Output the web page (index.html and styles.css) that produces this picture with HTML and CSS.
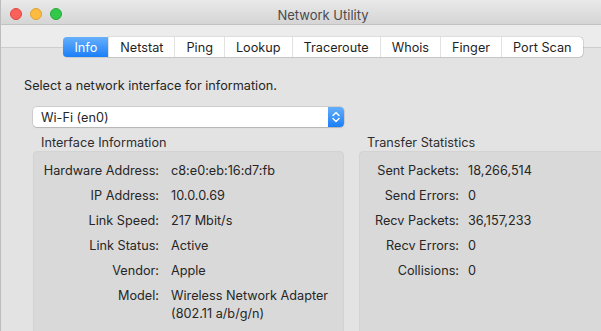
FILE: index.html
```html
<!DOCTYPE html>
<html>
<head>
<meta charset="utf-8">
<title>Network Utility</title>
<link rel="stylesheet" href="styles.css">
</head>
<body>
<div class="window">
  <header class="titlebar">
    <div class="lights">
      <span class="light close"></span>
      <span class="light min"></span>
      <span class="light max"></span>
    </div>
    <div class="title">Network Utility</div>
    <div></div>
  </header>
  <main class="main">
    <nav class="tabs">
      <span class="tab active">Info</span>
      <span class="tab">Netstat</span>
      <span class="tab">Ping</span>
      <span class="tab">Lookup</span>
      <span class="tab">Traceroute</span>
      <span class="tab">Whois</span>
      <span class="tab">Finger</span>
      <span class="tab">Port Scan</span>
    </nav>
    <section class="pane">
      <p class="prompt">Select a network interface for information.</p>
      <div class="popup">
        <span class="popup-label">Wi-Fi (en0)</span>
        <span class="stepper">
          <svg width="16" height="20" viewBox="0 0 16 20"><polyline points="5,8.5 8,5.5 11,8.5" fill="none" stroke="#fff" stroke-width="1.4" stroke-linecap="round" stroke-linejoin="round"/><polyline points="5,11.5 8,14.5 11,11.5" fill="none" stroke="#fff" stroke-width="1.4" stroke-linecap="round" stroke-linejoin="round"/></svg>
        </span>
      </div>
      <div class="groups">
        <div class="group">
          <div class="group-title">Interface Information</div>
          <dl class="box box-left">
            <dt>Hardware Address:</dt><dd>c8:e0:eb:16:d7:fb</dd>
            <dt>IP Address:</dt><dd>10.0.0.69</dd>
            <dt>Link Speed:</dt><dd>217 Mbit/s</dd>
            <dt>Link Status:</dt><dd>Active</dd>
            <dt>Vendor:</dt><dd>Apple</dd>
            <dt>Model:</dt><dd>Wireless Network Adapter<br>(802.11 a/b/g/n)</dd>
          </dl>
        </div>
        <div class="group">
          <div class="group-title">Transfer Statistics</div>
          <dl class="box box-right">
            <dt>Sent Packets:</dt><dd>18,266,514</dd>
            <dt>Send Errors:</dt><dd>0</dd>
            <dt>Recv Packets:</dt><dd>36,157,233</dd>
            <dt>Recv Errors:</dt><dd>0</dd>
            <dt>Collisions:</dt><dd>0</dd>
          </dl>
        </div>
      </div>
    </section>
  </main>
</div>
</body>
</html>
```

FILE: styles.css
```css
html, body {
  margin: 0;
  padding: 0;
  overflow: hidden;
  background: #e3e3e3;
}

body {
  font-family: Inter, "Liberation Sans", sans-serif;
  font-size: 12.7px;
  color: #262626;
}

.window {
  width: 645px;
  height: 331px;
  border-left: 1px solid #bdbdbd;
  display: flex;
  flex-direction: column;
  overflow: hidden;
  box-sizing: border-box;
}

.titlebar {
  height: 24px;
  flex: none;
  display: grid;
  grid-template-columns: 1fr auto 1fr;
  align-items: center;
  background: linear-gradient(#e9e9e9, #d5d5d5);
  border-bottom: 1px solid #c2c2c2;
}

.lights {
  display: flex;
  gap: 8px;
  padding-left: 9px;
  padding-top: 4px;
}

.light {
  width: 12px;
  height: 12px;
  border-radius: 50%;
  box-sizing: border-box;
}

.close { background: #fc605b; border: 0.5px solid #de4842; }
.min { background: #fdbc40; border: 0.5px solid #dea235; }
.max { background: #34c84a; border: 0.5px solid #27a93a; }

.title {
  color: #4a4a4a;
  padding-top: 5px;
  font-size: 13px;
}

.main {
  flex: 1;
  background: linear-gradient(#ececec 0, #ececec 22px, #cdcdcd 22px, #cdcdcd 23px, #e3e3e3 23px);
}

.tabs {
  display: flex;
  justify-content: center;
  margin-top: 12px;
  height: 20px;
}

.tab {
  display: flex;
  align-items: center;
  padding: 0 11px;
  background: #fff;
  border-left: 1px solid #e2e2e2;
  box-shadow: 0 0.5px 0 rgba(0,0,0,0.25), 0 -0.5px 0 rgba(0,0,0,0.12);
  color: #1f1f1f;
}

.tab:first-child {
  border-left: none;
  border-radius: 4px 0 0 4px;
}

.tab:last-child {
  border-radius: 0 4px 4px 0;
  box-shadow: 0 0.5px 0 rgba(0,0,0,0.25), 0 -0.5px 0 rgba(0,0,0,0.12), 0.5px 0 0 rgba(0,0,0,0.2);
}

.tab.active {
  background: linear-gradient(#67b0fb, #1b7ff8);
  color: #fff;
  box-shadow: 0 0.5px 0 rgba(0,0,0,0.2);
}

.pane {
  padding-left: 23px;
}

.prompt {
  margin: 21px 0 0 0;
  line-height: 16px;
}

.popup {
  margin: 13px 0 0 9px;
  width: 311px;
  height: 20px;
  display: flex;
  align-items: center;
  justify-content: space-between;
  background: #fff;
  border-radius: 4px;
  box-shadow: 0 0 0 0.5px rgba(0,0,0,0.18), 0 1px 1px rgba(0,0,0,0.12);
}

.popup-label {
  padding-left: 8px;
}

.stepper {
  width: 16px;
  height: 20px;
  border-radius: 0 4px 4px 0;
  background: linear-gradient(#65aefb, #1a7ff7);
  display: flex;
}

.groups {
  display: grid;
  grid-template-columns: 311px 311px;
  column-gap: 15px;
  margin-left: 9px;
  margin-top: 8px;
}

.group-title {
  line-height: 16px;
  padding-left: 8px;
  color: #2e2e2e;
}

.box {
  margin: 0;
  height: 200px;
  background: #d9d9d9;
  border: 1px solid #d3d3d3;
  border-radius: 4px;
  box-sizing: border-box;
  display: grid;
  align-content: start;
  row-gap: 7px;
  padding-top: 10px;
  line-height: 18px;
}

.box dt {
  text-align: right;
}

.box dd {
  margin: 0;
}

.box-left {
  grid-template-columns: 125px 1fr;
  column-gap: 12px;
}

.box-right {
  grid-template-columns: 99px 1fr;
  column-gap: 9px;
}
```
